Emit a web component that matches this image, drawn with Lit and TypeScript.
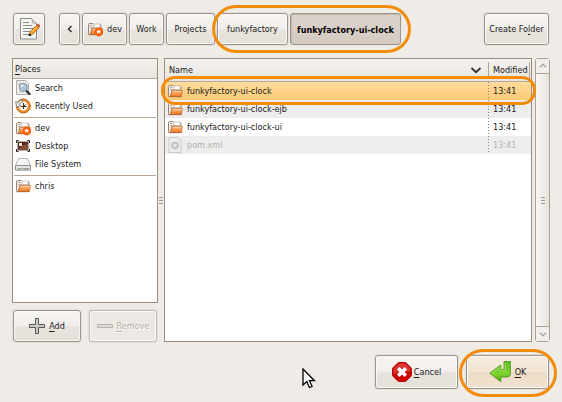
import { LitElement, html, css, svg } from "lit";
import { customElement, property } from "lit/decorators.js";

const folderShape = svg`
  <path d="M1.500 3.500q0-1 1-1h3.500l1 1h6q1 0 1 1v2.500h-9l-1.500 6.500h-1q-1 0-1-1z" fill="#efebe8" stroke="#9b8478"/>
  <path d="M3 4.500h2.500M3 6.500h2" stroke="#b9aaa0" fill="none"/>
  <path d="M7 3h6v3.500H7z" fill="#fff" stroke="#b9aaa0" stroke-width=".6"/>
  <path d="M5.200 7.500h10.200l-1 6H2.700q1.400-.6 1.600-2.600z" fill="url(#fo)" stroke="#cf6d2c" stroke-width=".8"/>
  <path d="M5.800 8.300h8.700" stroke="#ffe0c2" stroke-width=".8" fill="none"/>
  <path d="M1.500 13.700h13" stroke="#a8603a" stroke-width=".8"/>`;
const folderGradient = svg`<defs><linearGradient id="fo" x1="0" y1="0" x2="0" y2="1">
  <stop offset="0" stop-color="#fdc08a"/><stop offset="1" stop-color="#ee7417"/></linearGradient></defs>`;

const icons: Record<string, unknown> = {
  folder: html`<svg viewBox="0 0 16 16">${folderGradient}${folderShape}</svg>`,
  home: html`<svg viewBox="0 0 16 16">${folderGradient}${folderShape}
    <circle cx="11.700" cy="11" r="4.400" fill="#f9600a"/>
    <path d="M11.700 8.800l2.400 2.300h-.8v1.500h-1v-1h-1.200v1h-1v-1.500h-.8z" fill="#fff"/></svg>`,
  search: html`<svg viewBox="0 0 16 16">
    <path d="M1.500 .5h9l3 3v11h-12z" fill="#f3f3f1" stroke="#aaa"/>
    <path d="M3 3h3M3 5h2M3 12h6" stroke="#bbb"/>
    <path d="M11 10.500l3.500 3.500" stroke="#333" stroke-width="2.400" stroke-linecap="round"/>
    <circle cx="8.300" cy="7.300" r="4" fill="#a9c6e2" stroke="#9a9c98" stroke-width="1.200"/>
    <path d="M6 7q.5-2 2.500-2.200" stroke="#fff" fill="none" stroke-width="1.200"/></svg>`,
  recent: html`<svg viewBox="0 0 16 16">
    <circle cx="8.300" cy="8" r="7" fill="#f08a24" stroke="#c4600f"/>
    <circle cx="8.300" cy="8" r="4.900" fill="#fdf3e4" stroke="#c98c50" stroke-width=".6"/>
    <path d="M.6 3.500l1 5.700 4.600-1.500-2-1.300q1.200-2 3.300-2.400V2Q4.400 2.200 2.700 4.800z" fill="#eee" stroke="#777" stroke-width=".8"/>
    <path d="M8.500 5v6M6 8.500h5.500M8.500 8.500l2-2" stroke="#333"/></svg>`,
  desktop: html`<svg viewBox="0 0 16 16">
    <rect x="2.500" y="3.500" width="11" height="9" fill="#552a1b" stroke="#b5a8a0"/>
    <path d="M3 12q4-6 10-6v6z" fill="#85503a"/>
    <rect x="4" y="5" width="3" height="3" fill="#f0e6de"/>
    <path d="M1.500 5V2.500h2M12.500 2.500h2V5M14.500 11v2.500h-2M3.500 13.500h-2V11" fill="none" stroke="#222"/></svg>`,
  drive: html`<svg viewBox="0 0 16 16">
    <path d="M3.500 2.500h9l3 7v4.500H.5V9.500z" fill="#f6f6f6" stroke="#b5b5b5"/>
    <path d="M.5 9.500h15v4.500H.5z" fill="#e4e4e4" stroke="#8f8f8f"/>
    <path d="M3 12.500h2M8 12.500h6" stroke="#999"/><path d="M5.500 12.500h1.500" stroke="#60b030"/></svg>`,
  file: html`<svg viewBox="0 0 16 16">
    <path d="M2 .5h9l3 3v12H2z" fill="#ececea" stroke="#cacac6"/>
    <circle cx="8" cy="8.500" r="3.300" fill="#d0d0ce" stroke="#b5b5b2"/>
    <circle cx="8" cy="8.500" r="1.200" fill="#eee"/></svg>`,
  edit: html`<svg viewBox="0 0 22 22">
    <path d="M2.500 .5h11l5 5v15.500h-16z" fill="#f5f5f3" stroke="#8b8d88"/>
    <path d="M13.500 .8q1.500 2 .8 4.200 2.200-.5 4 .8z" fill="#fff" stroke="#a9aba6"/>
    <path d="M5 4.500h6M5 7.500h9M5 10.500h11M5 13.500h8M5 16.500h6" stroke="#8d8f8b"/>
    <path d="M11 17.800l1.200-4L18.800 7.200l2.300 2.300-6.600 6.800z" fill="#fba51c" stroke="#a04d05" stroke-width=".8"/>
    <path d="M13 14.500l6.500-6.500" stroke="#ffd55c"/>
    <path d="M18.800 7.200l1.300-1.200q1.500.3 1.600 2l-.8 1.300z" fill="#e0483a" stroke="#a33" stroke-width=".5"/>
    <path d="M11 17.800l.6-1.900 1.400 1.100z" fill="#222" stroke="#222"/></svg>`,
  back: html`<svg viewBox="0 0 16 16"><path d="M9.500 5L6.500 8l3 3" fill="none" stroke="#333" stroke-width="1.500"/></svg>`,
  add: html`<svg viewBox="0 0 16 16"><path d="M6.500 .5h3v6h6v3h-6v6h-3v-6h-6v-3h6z" fill="#c9cbc8" stroke="#555753"/></svg>`,
  remove: html`<svg viewBox="0 0 16 16"><path d="M.5 6.500h15v3H.5z" fill="#dcdad7" stroke="#b9b5b0"/></svg>`,
  cancel: html`<svg viewBox="0 0 20 20">
    <path d="M6.200.6h7.600l5.600 5.600v7.600l-5.600 5.600H6.200L.6 13.800V6.200z" fill="#cc0202" stroke="#b50000"/>
    <path d="M6.600 1.600h6.800l5 5v3.200Q8 9 1.600 12V6.600z" fill="#dc3535"/>
    <path d="M6.200 6.200l7.600 7.600M13.800 6.200l-7.600 7.600" stroke="#fff" stroke-width="3.600"/></svg>`,
  ok: html`<svg viewBox="0 0 22 22">
    <defs><linearGradient id="gr" x1="0" y1="0" x2="0" y2="1"><stop offset="0" stop-color="#62b82c"/><stop offset=".6" stop-color="#7fd62e"/><stop offset="1" stop-color="#4fa010"/></linearGradient></defs>
    <path d="M15 .6h6.400v12q0 3.400-3.400 3.400h-6.200v4.800L.8 12.200 11.800 4v4.700H15z" fill="url(#gr)" stroke="#4c9a1c" stroke-width=".9"/>
    <path d="M16.200 1.800v8h-5.500V6.500L3 12" fill="none" stroke="#a4e36c" stroke-width=".8"/></svg>`,
  sort: html`<svg viewBox="0 0 16 16"><path d="M3.500 6L8 10.200 12.500 6" fill="none" stroke="#333" stroke-width="1.800"/></svg>`,
  up: html`<svg viewBox="0 0 16 16"><path d="M4.500 9.500L8 6l3.500 3.500" fill="none" stroke="#b0a8a0" stroke-width="1.500"/></svg>`,
  down: html`<svg viewBox="0 0 16 16"><path d="M4.500 6.500L8 10l3.500-3.500" fill="none" stroke="#b0a8a0" stroke-width="1.500"/></svg>`,
};

@customElement("ui-icon")
export class UiIcon extends LitElement {
  @property() name = "";
  @property({ type: Number }) size = 16;
  static styles = css`
    :host { display: inline-flex; flex: none; }
    svg { width: 100%; height: 100%; display: block; }
  `;
  render() {
    return html`<span style="width:${this.size}px;height:${this.size}px">${icons[this.name]}</span>`;
  }
}

interface Entry { name: string; icon: string; time: string; state: string; }

@customElement("app-root")
export class AppRoot extends LitElement {
  private places = [
    [["search", "Search"], ["recent", "Recently Used"]],
    [["home", "dev"], ["desktop", "Desktop"], ["drive", "File System"]],
    [["folder", "chris"]],
  ];
  private entries: Entry[] = [
    { name: "funkyfactory-ui-clock", icon: "folder", time: "13:41", state: "selected" },
    { name: "funkyfactory-ui-clock-ejb", icon: "folder", time: "13:41", state: "even" },
    { name: "funkyfactory-ui-clock-ui", icon: "folder", time: "13:41", state: "" },
    { name: "pom.xml", icon: "file", time: "13:41", state: "even muted" },
  ];

  static styles = css`
    :host {
      display: flex; flex-direction: column; box-sizing: border-box;
      min-height: 100vh; padding: 13px 12px; position: relative;
      background: #efebe7; color: #1a1a1a;
      font: 9px/12px "DejaVu Sans Condensed", "DejaVu Sans", sans-serif;
    }
    * { box-sizing: border-box; }
    button {
      font: inherit; color: inherit; margin: 0; padding: 0 6px; height: 32px;
      display: inline-flex; align-items: center; justify-content: center; gap: 4px;
      border: 1px solid #9d958c; border-radius: 3px; white-space: nowrap;
      background: linear-gradient(#f7f5f3, #f1eeeb 50%, #e9e4df 52%, #e6e0da);
      box-shadow: inset 0 0 0 1px #faf8f6, 0 0 0 1px #e3ded8;
    }
    button:disabled { color: #b5aca3; border-color: #c4bcb4; text-shadow: 1px 1px #fff; background: #ece8e4; }
    u { text-underline-offset: 2px; }
    .toolbar { display: flex; align-items: center; padding: 0 1px; margin-bottom: 13px; }
    .path { display: flex; gap: 2px; margin-left: 14px; }
    .edit { width: 32px; padding: 0; }
    .back { width: 21px; padding: 0; }
    .home { width: 45px; padding: 0; }
    .crumb { width: 35px; padding: 0; }
    .wide { width: 49px; }
    .marked { display: flex; gap: 2px; position: relative; }
    .parent { width: 71px; }
    .current { width: 111px; font-weight: bold; color: #000; background: linear-gradient(#ddd5cd, #d3cac1); box-shadow: inset 1px 1px 1px #c0b5aa; padding-top: 2px; }
    .create { margin-left: auto; width: 65px; padding: 0; }
    .ring { position: absolute; border: 3px solid #f28c0a; border-radius: 24px; pointer-events: none; z-index: 2; }
    .ring-path { inset: -8px -10px -8px -5px; }
    .ring-row { inset: 17px -5px auto -4px; height: 29px; border-radius: 14px; }
    .ring-ok { inset: -6px -8px -8px -7px; }
    .main { display: grid; grid-template-columns: 146px 6px minmax(0, 1fr) 3px 15px; flex: 1; }
    .side { display: flex; flex-direction: column; }
    .places { flex: 1; background: #fff; border: 1px solid #9c8c7c; margin-bottom: 7px; }
    .title { margin: 0; font-size: 9px; font-weight: normal; height: 20px; padding: 4px 2px; border-bottom: 1px solid #b5a99c; background: linear-gradient(#f5f2f0, #e9e4df); }
    .group { list-style: none; margin: 0; padding: 0; }
    .group + .group::before { content: ""; display: block; height: 4px; margin: 0 1px; background: linear-gradient(#b8a692, #b8a692) 0 2px / 100% 1px no-repeat; }
    .place { display: flex; align-items: center; gap: 4px; height: 18px; padding: 0 2px; color: inherit; text-decoration: none; }
    .manage { display: flex; justify-content: space-between; padding: 0 1px; }
    .manage button { width: 68px; height: 32px; }
    .splitter, .grip { display: flex; flex-direction: column; align-items: center; justify-content: center; gap: 2px; }
    .splitter i, .grip i { width: 4px; height: 1px; background: #a79b8f; }
    .files { position: relative; background: #fff; border: 1px solid #9c8c7c; }
    table { width: 100%; border-collapse: separate; border-spacing: 0; table-layout: fixed; }
    th { height: 23px; padding: 0 4px; text-align: left; font-weight: normal; border-bottom: 1px solid #b5a99c; background: linear-gradient(#f5f2f0, #e9e4df); }
    .head { display: flex; align-items: center; justify-content: space-between; }
    .date { width: 43px; }
    th.date { background: linear-gradient(#b0a69c, #b0a69c) 0 3px / 1px 17px no-repeat, linear-gradient(#b0a69c, #b0a69c) 41px 3px / 1px 17px no-repeat, linear-gradient(#f5f2f0, #e9e4df); padding: 0 0 0 5px; }
    td { height: 18px; padding: 0 2px; }
    td.date { padding: 0 0 0 5px; background: repeating-linear-gradient(#8c8880 0 1px, transparent 1px 3px) 0 0 / 1px 100% no-repeat; }
    .file { display: flex; align-items: center; gap: 4px; }
    .even { background: #ededed; }
    .selected { background: linear-gradient(#ffdb9b, #fbcb77); }
    .muted { color: #b5b0aa; }
    .scroll { display: flex; flex-direction: column; border: 1px solid #aaa096; border-radius: 3px; background: #eeeae6; }
    .scroll button { width: 100%; height: 14px; padding: 0; border: 0; border-radius: 0; box-shadow: none; background: #f1eeeb; }
    .grip { flex: 1; border: solid #aaa096; border-width: 1px 0; background: linear-gradient(90deg, #f8f6f4, #e7e2dd); }
    .actions { display: flex; justify-content: flex-end; gap: 8px; margin-top: 13px; padding-right: 1px; }
    .actions button { width: 83px; height: 34px; gap: 2px; }
    .default { position: relative; display: flex; }
    .actions .default button { gap: 4px; background: linear-gradient(#f6ecdf, #f3e5d2 50%, #eddcc6 52%, #f0e1ce); }
    .pointer { position: absolute; left: 302px; top: 368px; width: 14px; height: 21px; }
  `;

  render() {
    return html`
      <nav class="toolbar">
        <button class="edit" aria-label="Type a file name"><ui-icon name="edit" size="22"></ui-icon></button>
        <div class="path">
          <button class="back" aria-label="Back"><ui-icon name="back"></ui-icon></button>
          <button class="home"><ui-icon name="home"></ui-icon>dev</button>
          <button class="crumb">Work</button>
          <button class="crumb wide">Projects</button>
          <div class="marked">
            <button class="parent">funkyfactory</button>
            <button class="current" aria-pressed="true">funkyfactory-ui-clock</button>
            <span class="ring ring-path"></span>
          </div>
        </div>
        <button class="create"><span>Create Fo<u>l</u>der</span></button>
      </nav>
      <main class="main">
        <section class="side">
          <div class="places">
            <h2 class="title"><u>P</u>laces</h2>
            ${this.places.map((g) => html`<ul class="group">${g.map(([icon, label]) => html`
              <li><a class="place" href="#"><ui-icon name=${icon}></ui-icon>${label}</a></li>`)}</ul>`)}
          </div>
          <div class="manage">
            <button><ui-icon name="add"></ui-icon><span><u>A</u>dd</span></button>
            <button disabled><ui-icon name="remove"></ui-icon><span><u>R</u>emove</span></button>
          </div>
        </section>
        <div class="splitter"><i></i><i></i><i></i></div>
        <section class="files">
          <table>
            <thead><tr>
              <th><span class="head">Name<ui-icon name="sort"></ui-icon></span></th>
              <th class="date">Modified</th>
            </tr></thead>
            <tbody>${this.entries.map((e) => html`<tr class=${e.state}>
              <td><span class="file"><ui-icon name=${e.icon}></ui-icon>${e.name}</span></td>
              <td class="date">${e.time}</td></tr>`)}</tbody>
          </table>
          <span class="ring ring-row"></span>
        </section>
        <span></span>
        <div class="scroll">
          <button aria-label="Scroll up"><ui-icon name="up" size="14"></ui-icon></button>
          <div class="grip"><i></i><i></i><i></i></div>
          <button aria-label="Scroll down"><ui-icon name="down" size="14"></ui-icon></button>
        </div>
      </main>
      <footer class="actions">
        <button><ui-icon name="cancel" size="20"></ui-icon><span><u>C</u>ancel</span></button>
        <div class="default">
          <button><ui-icon name="ok" size="22"></ui-icon><span><u>O</u>K</span></button>
          <span class="ring ring-ok"></span>
        </div>
      </footer>
      <svg class="pointer" viewBox="0 0 14 21">
        <path d="M1 1v16l3.800-3.400 2.600 5.900 2.700-1.200-2.600-5.600h5z" fill="#fff" stroke="#000" stroke-width="1.300"/>
      </svg>`;
  }
}
